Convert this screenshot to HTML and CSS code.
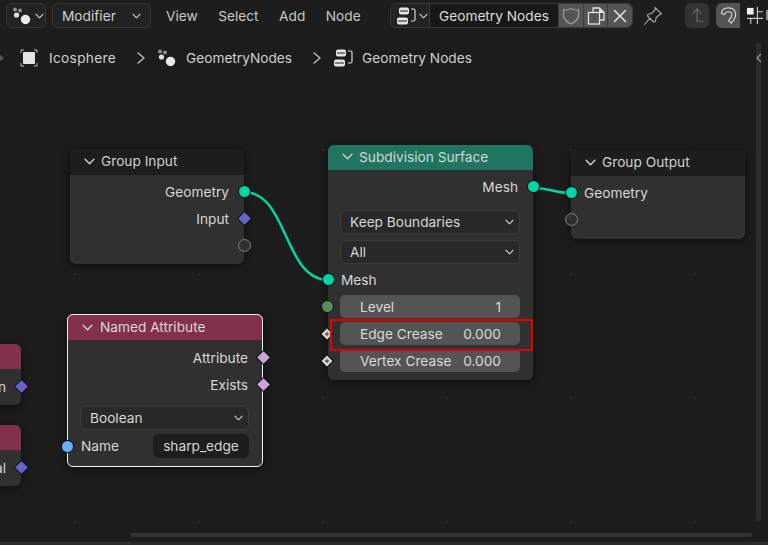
FILE: index.html
```html
<!DOCTYPE html>
<html lang="en">
<head>
<meta charset="utf-8">
<title>Geometry Nodes</title>
<link rel="stylesheet" href="styles.css">
</head>
<body>
<svg class="defs" width="0" height="0">
  <symbol id="chev" viewBox="0 0 10 6"><path d="M1 1l4 4 4-4" fill="none" stroke="currentColor" stroke-width="1.2" stroke-linecap="round" stroke-linejoin="round"/></symbol>
  <symbol id="sep" viewBox="0 0 8 12"><path d="M1 1l6 5-6 5" fill="none" stroke="currentColor" stroke-width="1.3" stroke-linecap="round" stroke-linejoin="round"/></symbol>
  <symbol id="geo" viewBox="0 0 20 18"><circle cx="3" cy="2.500" r="2" fill="#8f8f8f"/><circle cx="8" cy="3.500" r="2" fill="#8f8f8f"/><circle cx="4.500" cy="8" r="2.600" fill="#e0e0e0"/><circle cx="13.500" cy="12.500" r="4.700" fill="#ececec"/></symbol>
  <symbol id="tree" viewBox="0 0 20 20"><rect x="3" y="1.500" width="10" height="7" rx="2" fill="#e6e6e6"/><rect x="1" y="11.500" width="11" height="7" rx="2" fill="#e6e6e6"/><path d="M4 5h8M2 15h9" stroke="#1d1d1d" stroke-width="1"/><path d="M15 3h2.500q1.500 0 1.500 1.500v9q0 1.500-1.500 1.500H15" fill="none" stroke="#d8d8d8" stroke-width="1.200"/></symbol>
</svg>
<div class="app">
  <header class="topbar">
    <div class="btn editor">
      <svg class="ic-geo"><use href="#geo"/></svg>
      <svg class="chev"><use href="#chev"/></svg>
    </div>
    <div class="btn mode"><span>Modifier</span><svg class="chev"><use href="#chev"/></svg></div>
    <nav class="menu"><span>View</span><span>Select</span><span>Add</span><span>Node</span></nav>
    <div class="treepicker">
      <div class="tree-type">
        <svg class="ic-tree"><use href="#tree"/></svg>
        <svg class="chev"><use href="#chev"/></svg>
      </div>
      <div class="tree-name">Geometry Nodes</div>
      <div class="tree-act">
        <svg viewBox="0 0 20 20"><path d="M10 2.500q4 2 7.500 1.500v6q-1 5-7.500 8-6.500-3-7.500-8V4q3.500.5 7.500-1.500z" fill="none" stroke="#9a9a9a" stroke-width="1.300"/></svg>
      </div>
      <div class="tree-act">
        <svg viewBox="0 0 20 20"><path d="M7 6V2h6.500L18 6.500V14h-4" fill="none" stroke="#e0e0e0" stroke-width="1.300"/><path d="M13 2v5h5z" fill="#e0e0e0"/><rect x="2.500" y="6.500" width="11" height="11.500" fill="none" stroke="#e0e0e0" stroke-width="1.300"/></svg>
      </div>
      <div class="tree-act">
        <svg viewBox="0 0 20 20"><path d="M4.500 4.500l11 11M15.500 4.500l-11 11" stroke="#e6e6e6" stroke-width="1.500" stroke-linecap="round"/></svg>
      </div>
    </div>
    <svg class="pin" viewBox="0 0 20 20"><path d="M12 1.500l6.500 6.500-2 .5-3.500 3.500-.5 3.500-2 .5-6-6 .5-1.800 3.500-.7 3.500-3.500zM6.500 12.500L1.500 18.500" fill="none" stroke="#a8a8a8" stroke-width="1.100" stroke-linejoin="round" stroke-linecap="round"/></svg>
    <div class="tool up">
      <svg viewBox="0 0 20 20"><path d="M5 8l4.500-5L14 8M9.500 3v13h7" fill="none" stroke="#6a6a6a" stroke-width="1.200"/></svg>
    </div>
    <div class="snapgroup">
      <div class="tool snap">
        <svg viewBox="0 0 20 20"><path d="M2.500 8Q3 2 10 2q7.500 0 7.500 7 0 4-4.500 9l-3-2.500q3.500-3.500 3.500-6.500 0-3-3.500-3-3.500 0-4 3z" fill="none" stroke="#d0d0d0" stroke-width="1.200" stroke-linejoin="round"/></svg>
      </div>
      <div class="tool grid">
        <svg viewBox="0 0 20 20"><rect x="1" y="2" width="7" height="7" fill="#f0f0f0"/><path d="M1 13h18M12 1v18M12 6h7M5 13v6" stroke="#c8c8c8" stroke-width="1.200"/></svg>
      </div>
    </div>
    <span class="edge-knob"></span>
  </header>

  <main class="canvas">
    <div class="crumbs">
      <span class="crumb-back"></span>
      <svg class="ic-focus" viewBox="0 0 18 18"><rect x="3" y="3" width="12" height="12" rx="1" fill="#e4e4e4"/><path d="M1 4V1h3M14 1h3v3M17 14v3h-3M4 17H1v-3" fill="none" stroke="#bdbdbd" stroke-width="1"/></svg>
      <span class="crumb-text c1">Icosphere</span>
      <svg class="sep"><use href="#sep"/></svg>
      <svg class="ic-geo c2"><use href="#geo"/></svg>
      <span class="crumb-text">GeometryNodes</span>
      <svg class="sep"><use href="#sep"/></svg>
      <svg class="ic-tree c2"><use href="#tree"/></svg>
      <span class="crumb-text">Geometry Nodes</span>
    </div>

    <svg class="links" viewBox="0 31 768 514">
      <path d="M244 192C288 192 284 280 328 280"/>
      <path d="M533 188C552 188 552 193 571 193"/>
    </svg>

    <section class="node stub stub-a">
      <div class="node-head attr"></div>
      <div class="row right"><span class="lab">n</span><i class="sock out dia blue"></i></div>
    </section>
    <section class="node stub stub-b">
      <div class="node-head attr"></div>
      <div class="row right"><span class="lab">al</span><i class="sock out dia blue"></i></div>
    </section>

    <section class="node g-in">
      <div class="node-head dark"><svg class="chev"><use href="#chev"/></svg><span>Group Input</span></div>
      <div class="node-body">
        <div class="row right"><span class="lab">Geometry</span><i class="sock out geo-s"></i></div>
        <div class="row right"><span class="lab">Input</span><i class="sock out dia blue"></i></div>
        <div class="row right"><i class="sock out empty"></i></div>
      </div>
    </section>

    <section class="node g-out">
      <div class="node-head dark"><svg class="chev"><use href="#chev"/></svg><span>Group Output</span></div>
      <div class="node-body">
        <div class="row"><i class="sock in geo-s"></i><span class="lab">Geometry</span></div>
        <div class="row"><i class="sock in empty"></i></div>
      </div>
    </section>

    <section class="node subdiv">
      <div class="node-head green"><svg class="chev"><use href="#chev"/></svg><span>Subdivision Surface</span></div>
      <div class="node-body">
        <div class="row right"><span class="lab">Mesh</span><i class="sock out geo-s"></i></div>
        <div class="select first"><span>Keep Boundaries</span><svg class="chev"><use href="#chev"/></svg></div>
        <div class="select"><span>All</span><svg class="chev"><use href="#chev"/></svg></div>
        <div class="row mesh-in"><i class="sock in geo-s"></i><span class="lab">Mesh</span></div>
        <div class="field"><i class="sock fld int"></i><span>Level</span><span>1</span></div>
        <div class="field"><i class="sock fld dia white"></i><span>Edge Crease</span><span>0.000</span></div>
        <div class="field"><i class="sock fld dia white"></i><span>Vertex Crease</span><span>0.000</span></div>
      </div>
    </section>

    <section class="node named">
      <div class="node-head attr"><svg class="chev"><use href="#chev"/></svg><span>Named Attribute</span></div>
      <div class="node-body">
        <div class="row right"><span class="lab">Attribute</span><i class="sock out dia pink"></i></div>
        <div class="row right"><span class="lab">Exists</span><i class="sock out dia pink"></i></div>
        <div class="select"><span>Boolean</span><svg class="chev"><use href="#chev"/></svg></div>
        <div class="name-row"><i class="sock in str"></i><span class="lab">Name</span><span class="input">sharp_edge</span></div>
      </div>
    </section>

    <div class="highlight"></div>
    <div class="hscroll"></div>
    <div class="vscroll"></div>
    <svg class="collapse" viewBox="0 0 6 10"><path d="M5 1L1 5l4 4" fill="none" stroke="#9a9a9a" stroke-width="1.200"/></svg>
  </main>
  <footer class="bottom"></footer>
</div>
</body>
</html>
```

FILE: styles.css
```css
* { box-sizing: border-box; }
html, body { margin: 0; height: 100%; }
body {
  background: #1d1d1d;
  color: #d9d9d9;
  font: 13.7px/16px Inter, "Liberation Sans", sans-serif;
  overflow: hidden;
}
.defs { position: absolute; }
.app { width: 768px; height: 545px; display: flex; flex-direction: column; overflow: hidden; }

/* header */
.topbar {
  flex: 0 0 31px;
  display: flex;
  align-items: center;
  padding-left: 6px;
  background: #1d1d1d;
  position: relative;
  overflow: hidden;
}
.btn {
  height: 25px;
  border: 1px solid #373737;
  border-radius: 6px;
  background: #222;
  display: flex;
  align-items: center;
}
.chev { width: 9px; height: 6px; color: #d4d4d4; flex: none; }
.ic-geo { width: 20px; height: 18px; flex: none; }
.ic-tree { width: 20px; height: 20px; flex: none; }
.editor { width: 40px; padding-left: 5px; gap: 3px; }
.mode { width: 99px; margin-left: 6px; padding: 0 9px; justify-content: space-between; }
.mode span { color: #cfcfcf; }
.menu { display: flex; margin-left: 15px; width: 224px; gap: 20.500px; }
.menu span { color: #c8c8c8; }
.treepicker {
  width: 243px;
  height: 25px;
  display: flex;
  flex: none;
  border: 1px solid #3a3a3a;
  border-radius: 6px;
  overflow: hidden;
}
.tree-type { width: 39px; flex: none; display: flex; align-items: center; padding-left: 5px; gap: 3px; background: #222; border-right: 1px solid #3a3a3a; }
.tree-name { width: 128px; flex: none; background: #181818; color: #dcdcdc; display: flex; align-items: center; padding-left: 9px; }
.tree-act { flex: 1; background: #545454; border-left: 1px solid #3e3e3e; display: flex; align-items: center; justify-content: center; }
.tree-act svg { width: 20px; height: 20px; }
.pin { width: 20px; height: 20px; margin-left: 10px; flex: none; }
.tool { height: 25px; display: flex; align-items: center; justify-content: center; flex: none; }
.tool svg { width: 19px; height: 19px; flex: none; }
.up { width: 24px; margin-left: 22px; background: #333; border-radius: 6px; }
.snapgroup { display: flex; margin-left: 7px; flex: none; }
.snap { width: 24px; background: #545454; border-radius: 6px 0 0 6px; }
.grid { width: 17px; margin-left: 6px; justify-content: flex-start; overflow: hidden; }
.edge-knob { position: absolute; right: 0; top: 10px; width: 2px; height: 10px; background: #8a8a8a; }

/* canvas */
.canvas {
  flex: 1;
  position: relative;
  background-color: #1c1c1c;
  background-image: radial-gradient(circle, #2b2b2b 0, #2b2b2b 1px, transparent 1.500px);
  background-size: 124px 124px;
  background-position: 13px -67px;
  overflow: hidden;
}
.crumbs { display: flex; align-items: center; height: 20px; margin-top: 17px; padding-left: 20px; position: relative; }
.crumb-back { position: absolute; left: 0; top: 7px; width: 4px; height: 6px; background: #5a5a5a; clip-path: polygon(0 0, 100% 50%, 0 100%); }
.ic-focus { width: 18px; height: 18px; flex: none; }
.crumb-text { color: #cfcfcf; }
.c1 { margin-left: 11px; letter-spacing: .3px; }
.sep { width: 8px; height: 12px; margin: 0 12px 0 21px; color: #c4c4c4; flex: none; }
.c2 { margin-right: 9px; }

.links { position: absolute; inset: 0; width: 768px; height: 514px; z-index: 2; pointer-events: none; }
.links path { fill: none; stroke: #00d6a3; stroke-width: 2.500; }

/* nodes */
.node {
  position: absolute;
  background: #303030;
  border-radius: 6px;
  box-shadow: 0 2px 8px rgba(0,0,0,.55);
}
.node-head {
  display: flex;
  align-items: center;
  gap: 6px;
  padding: 0 0 2px 14px;
  border-radius: 6px 6px 0 0;
  color: #d6d6d6;
}
.node-head .chev { width: 11px; height: 7px; }
.dark { background: #1d1d1d; color: #cfcfcf; }
.green { background: #1f7560; }
.attr { background: #83304a; }
.node-body { position: relative; }
.row { height: 27px; display: flex; align-items: center; position: relative; padding: 0 15px 0 13px; }
.right { justify-content: flex-end; }
.lab { color: #d6d6d6; }
.sock { position: absolute; z-index: 3; display: block; width: 11px; height: 11px; }
.sock.out { right: -5.500px; top: 8px; }
.sock.in { left: -5.500px; top: 8px; }
.geo-s { background: #00d6a3; border-radius: 50%; box-shadow: 0 0 0 1px #111; }
.empty { background: #303030; border: 1.500px solid #808080; border-radius: 50%; width: 13px; height: 13px; }
.sock.out.empty { right: -6.500px; top: 7px; }
.sock.in.empty { left: -6.500px; top: 7px; }
.dia { width: 9px; height: 9px; transform: rotate(45deg); box-shadow: 0 0 0 1px #111; }
.sock.out.dia { right: -4.500px; top: 9px; }
.blue { background: #6464cc; }
.pink { background: #cca6d6; }
.white { background: #555; box-shadow: inset 0 0 0 2.500px #d0d0d0, 0 0 0 1px #111; }
.int { background: #5d8a5d; border-radius: 50%; box-shadow: 0 0 0 1px #111; }
.str { background: #63b1ff; border-radius: 50%; box-shadow: 0 0 0 1px #111; }

.stub { border-radius: 0 6px 6px 0; width: 40px; left: -19px; }
.stub .node-head { height: 25px; padding: 0; border-radius: 0 6px 0 0; }
.stub .row { height: 36px; padding: 0 15px 0 0; overflow: visible; }
.stub .sock.out.dia { top: 13px; }
.stub-a { top: 313px; }
.stub-b { top: 394px; }

.g-in { left: 70px; top: 118px; width: 174px; height: 115px; }
.g-in .node-head { height: 26px; }
.g-in .node-body { padding-top: 3px; }
.g-out { left: 571px; top: 119px; width: 174px; height: 89px; }
.g-out .node-head { height: 26px; }
.g-out .node-body { padding-top: 3px; }
.g-out .row { padding-left: 13px; }

.subdiv { left: 328px; top: 114px; width: 205px; height: 235px; }
.subdiv .node-head { height: 25px; }
.subdiv .node-body { padding: 3px 13px 6px 12px; }
.subdiv .row { margin: 0 -13px 0 -12px; }
.select {
  height: 24px;
  display: flex;
  align-items: center;
  justify-content: space-between;
  padding: 0 5px 0 9px;
  background: #282828;
  border: 1px solid #3c3c3c;
  border-radius: 6px;
  color: #d6d6d6;
  margin-bottom: 6px;
}
.select.first { margin-top: 10px; }
.subdiv .row.mesh-in { margin-top: -4px; margin-bottom: 2px; }
.field {
  position: relative;
  height: 23px;
  display: flex;
  align-items: center;
  justify-content: space-between;
  padding: 0 19px 0 20px;
  background: #545454;
  border-radius: 5px;
  color: #d8d8d8;
  margin-bottom: 4px;
}
.sock.fld { left: -18px; top: 6px; }
.sock.fld.dia { width: 8px; height: 8px; left: -17px; top: 7.500px; }

.named {
  left: 67px;
  top: 283px;
  width: 196px;
  height: 153px;
  outline: 1px solid #f0f0f0;
  outline-offset: -1px;
}
.named .node-head { height: 26px; padding: 0 0 0 15px; gap: 7px; }
.named .node-body { padding: 4px 0 0; }
.named .row { padding-right: 15px; }
.named .select { margin: 8px 14px 3px 13px; }
.name-row { position: relative; top: 1px; height: 24px; display: flex; align-items: center; justify-content: space-between; padding: 0 14px; }
.sock.in.str { left: -5.500px; top: 6.500px; }
.input { width: 96px; height: 24px; background: #1d1d1d; border-radius: 6px; display: flex; align-items: center; justify-content: center; color: #d6d6d6; }

/* overlays */
.highlight { position: absolute; left: 330px; top: 288px; width: 203px; height: 32px; border: 2px solid #e60000; z-index: 4; }
.hscroll { position: absolute; left: 130px; top: 502px; width: 622px; height: 4px; background: #333; border-radius: 2px; }
.vscroll { position: absolute; left: 756px; top: 12px; width: 5px; height: 478px; background: #2c2c2c; border-radius: 2px; }
.collapse { position: absolute; left: 756px; top: 22px; width: 6px; height: 10px; }
.bottom { flex: 0 0 3px; background: #2b2b2b; }
```
